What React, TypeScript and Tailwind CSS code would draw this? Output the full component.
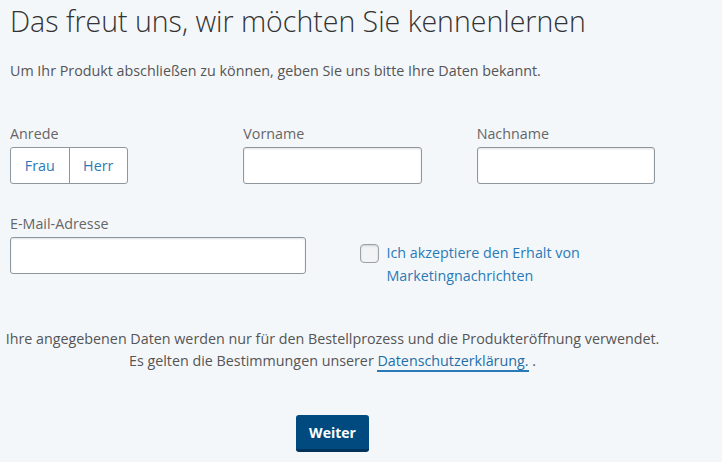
import { useState } from 'react';

export default function App() {
  const [anrede, setAnrede] = useState<'frau' | 'herr' | null>(null);
  const [marketing, setMarketing] = useState(false);

  const inputCls =
    'block w-full h-[37px] rounded-[3px] border border-[#8f979e] bg-white px-2 text-[14px] text-[#333] shadow-[inset_0_1px_2px_rgba(0,0,0,0.12)] outline-none';
  const labelCls = 'block text-[14.3px] leading-[20px] text-[#666]';

  return (
    <div className="min-h-[462px] bg-[#f4f7fa] font-['Open_Sans',sans-serif] text-[#555]">
      <div className="w-[655px] pl-[10px] pt-[2px]">
        <h1 className="text-[28.5px] leading-[38px] font-light text-[#333]">
          Das freut uns, wir möchten Sie kennenlernen
        </h1>
        <p className="mt-[21px] text-[14.3px] leading-[20px] text-[#555]">
          Um Ihr Produkt abschließen zu können, geben Sie uns bitte Ihre Daten bekannt.
        </p>

        {/* Row 1 */}
        <div className="mt-[43px] grid grid-cols-3 gap-x-[55px]">
          <div>
            <span className={labelCls}>Anrede</span>
            <div className="mt-[3px] flex h-[37px] w-[118px] rounded-[3px] border border-[#8f979e] bg-white">
              <button
                type="button"
                onClick={() => setAnrede('frau')}
                className={`flex-1 text-[14.3px] text-[#2a7ab8] ${anrede === 'frau' ? 'bg-[#e6eff7]' : ''}`}
              >
                Frau
              </button>
              <div className="w-px bg-[#8f979e]" />
              <button
                type="button"
                onClick={() => setAnrede('herr')}
                className={`flex-1 text-[14.3px] text-[#2a7ab8] ${anrede === 'herr' ? 'bg-[#e6eff7]' : ''}`}
              >
                Herr
              </button>
            </div>
          </div>
          <div>
            <label className={labelCls}>Vorname</label>
            <input className={`mt-[3px] ${inputCls}`} />
          </div>
          <div>
            <label className={labelCls}>Nachname</label>
            <input className={`mt-[3px] ${inputCls}`} />
          </div>
        </div>

        {/* Row 2 */}
        <div className="mt-[30px] grid grid-cols-2 gap-x-[54px]">
          <div>
            <label className={labelCls}>E-Mail-Adresse</label>
            <input className={`mt-[3px] ${inputCls}`} />
          </div>
          <label className="mt-[28px] flex cursor-pointer items-start gap-[8px]">
            <span
              onClick={() => setMarketing(!marketing)}
              className="mt-[2px] h-[19px] w-[19px] shrink-0 rounded-[4px] border border-[#9aa1a7] bg-[#f1f3f5] shadow-[inset_0_1px_2px_rgba(0,0,0,0.15)]"
            />
            <span className="text-[14.3px] leading-[22.5px] text-[#2a7ab8]">
              Ich akzeptiere den Erhalt von
              <br />
              Marketingnachrichten
            </span>
          </label>
        </div>

        {/* Footer note */}
        <p className="-ml-[10px] mt-[41px] w-[665px] text-center text-[14.3px] leading-[22px] text-[#555]">
          Ihre angegebenen Daten werden nur für den Bestellprozess und die Produkteröffnung verwendet.
          <br />
          Es gelten die Bestimmungen unserer{' '}
          <a href="#" className="border-b-2 border-[#2a7ab8] text-[#1f6ea8]">
            Datenschutzerklärung.
          </a>{' '}
          .
        </p>

        <div className="mt-[43px] flex justify-center">
          <button
            type="button"
            className="h-[37px] w-[73px] rounded-[3px] border-b-[3px] border-[#00335c] bg-[#004a7f] text-[14px] font-bold text-white"
          >
            Weiter
          </button>
        </div>
      </div>
    </div>
  );
}
